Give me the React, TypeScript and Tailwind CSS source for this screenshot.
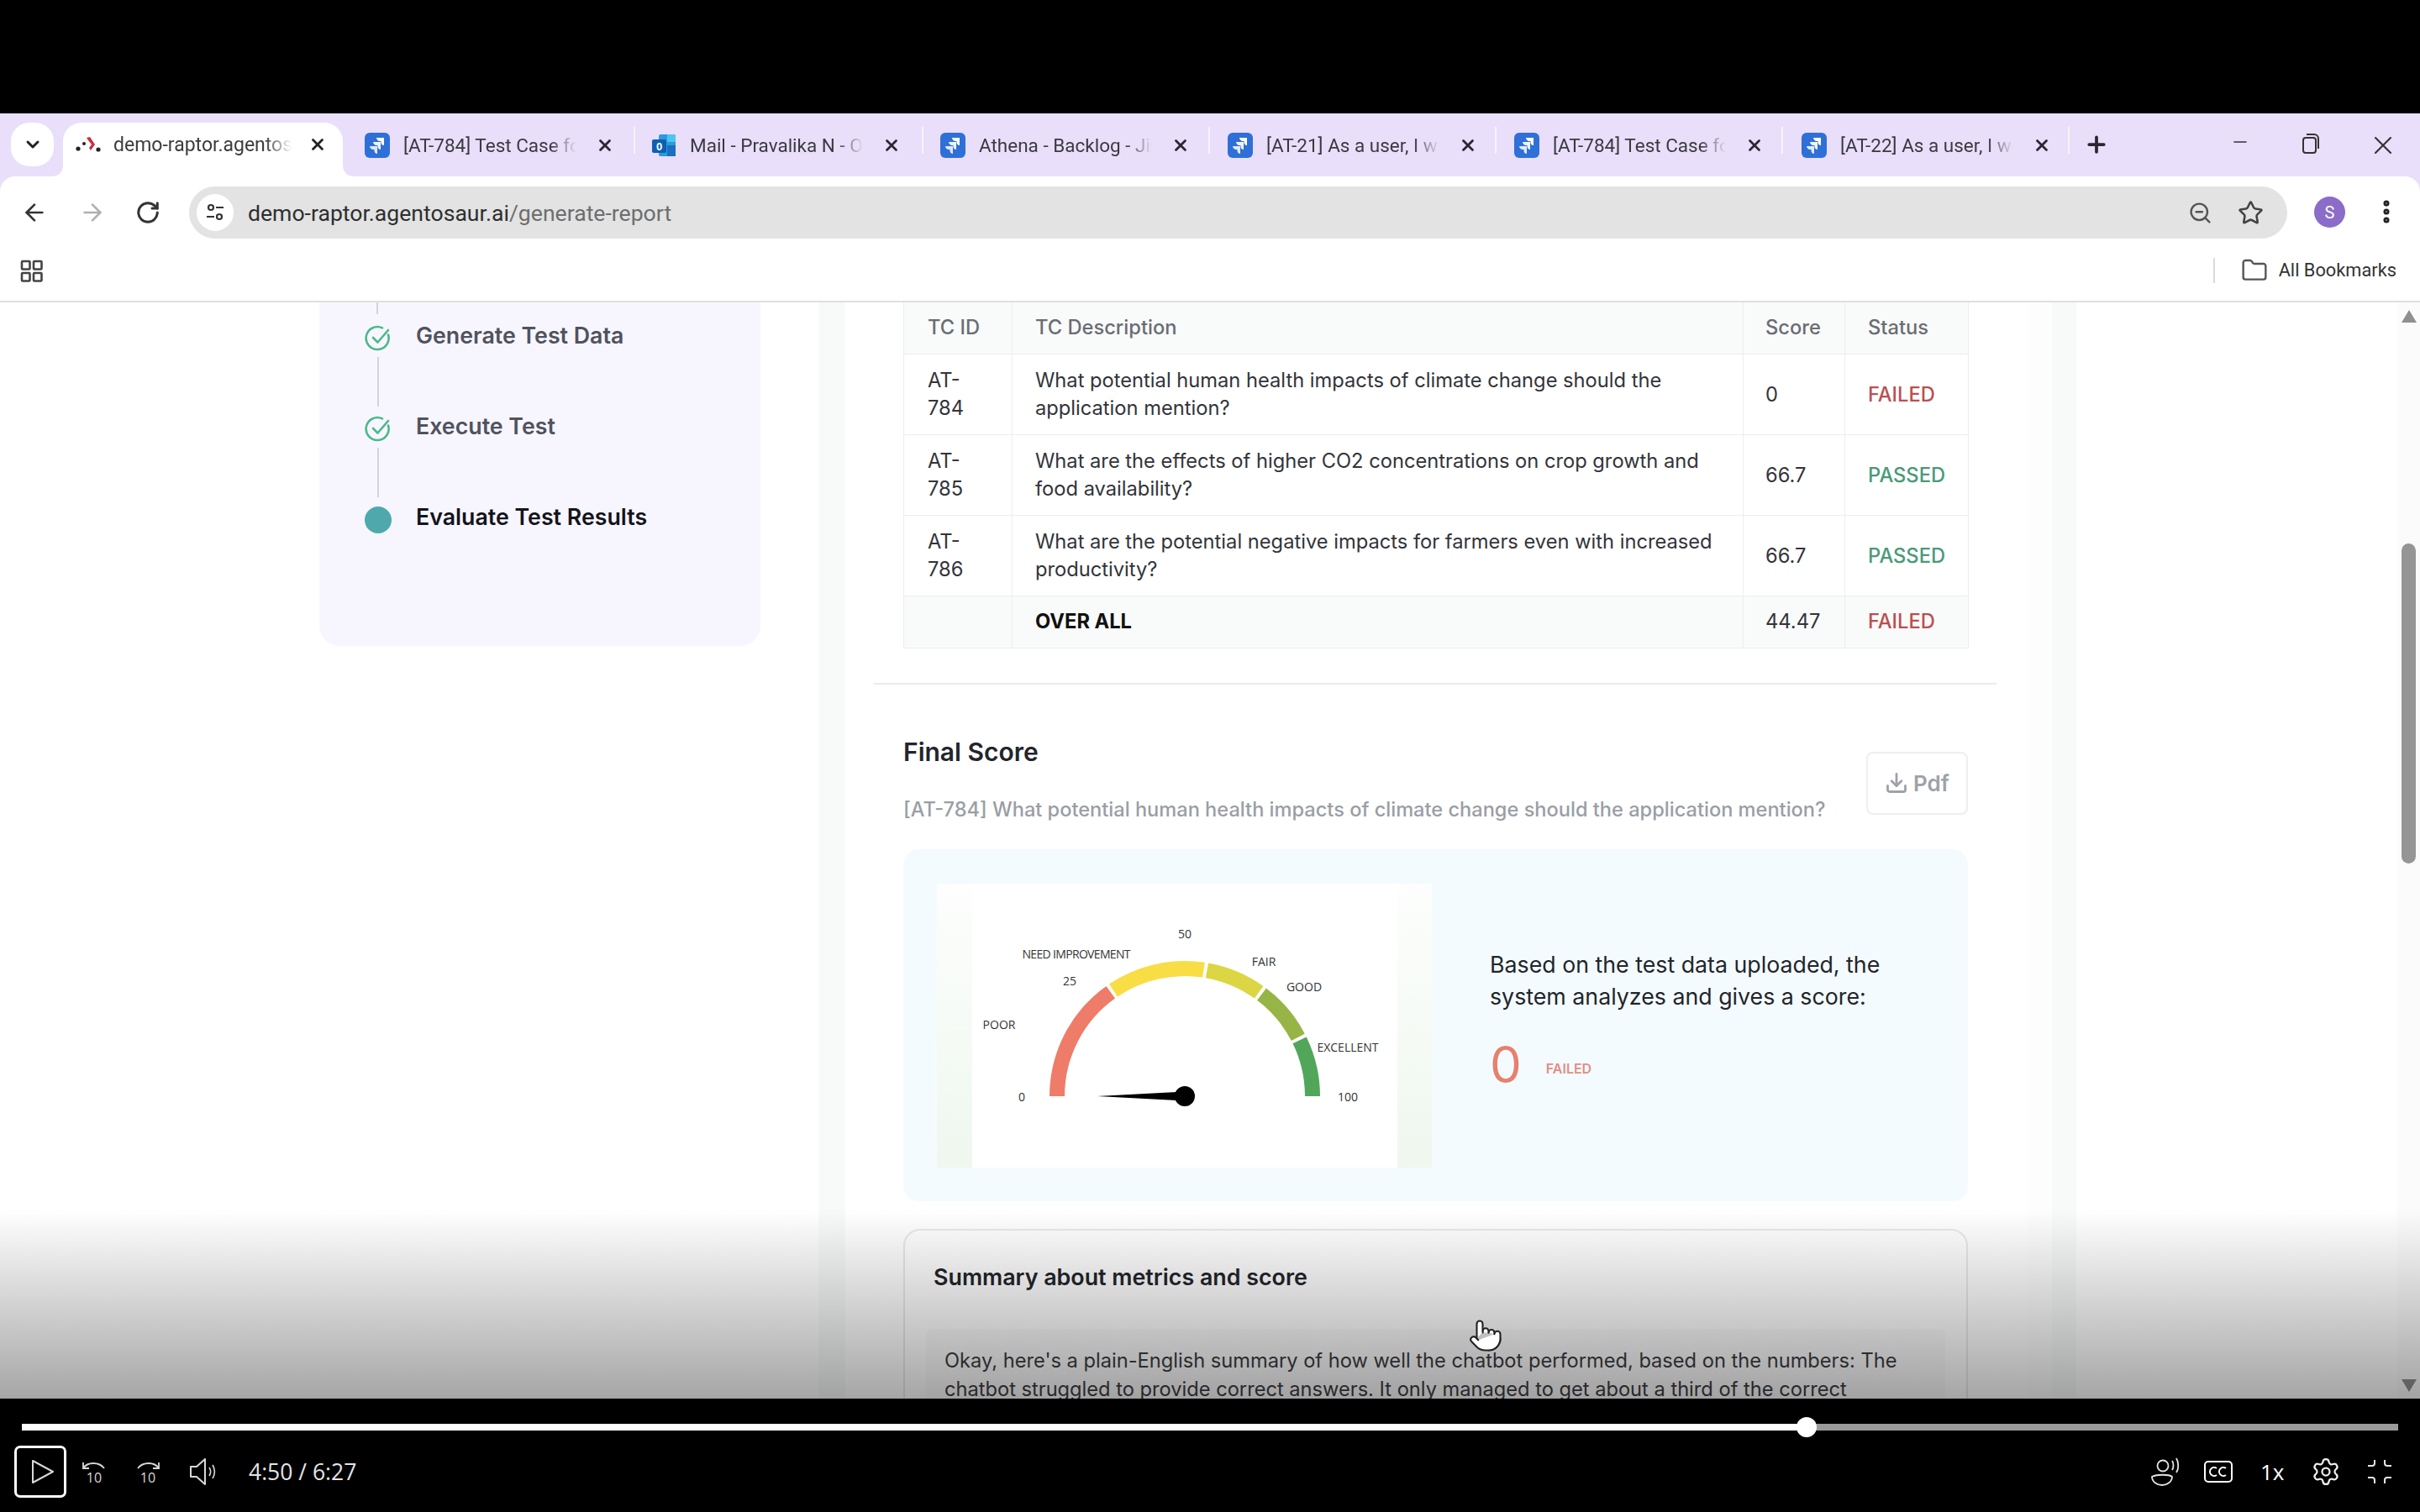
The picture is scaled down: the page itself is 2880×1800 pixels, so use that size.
import { ArrowLeft, ArrowRight, Download, Minus, Plus, RotateCw, Star, X, ZoomOut, EllipsisVertical, Folder, ChevronDown, Pointer, Settings } from "lucide-react";

const TABS = [
  { title: "[AT-784] Test Case for the user", icon: "jira", pl: "pl-[26px]", w: "w-[348px]" },
  { title: "Mail - Pravalika N - Outlook", icon: "mail", pl: "pl-[19px]", w: "w-[343px]" },
  { title: "Athena - Backlog - Jira board", icon: "jira", pl: "pl-[20px]", w: "w-[341px]" },
  { title: "[AT-21] As a user, I want to", icon: "jira", pl: "pl-[21px]", w: "w-[341px]" },
  { title: "[AT-784] Test Case for the user", icon: "jira", pl: "pl-[21px]", w: "w-[341px]" },
  { title: "[AT-22] As a user, I want to", icon: "jira", pl: "pl-[22px]", w: "w-[341px]" },
];

const ROWS = [
  { id: "AT-784", text: "What potential human health impacts of climate change should the application mention?", score: "0", status: "FAILED" },
  { id: "AT-785", text: "What are the effects of higher CO2 concentrations on crop growth and food availability?", score: "66.7", status: "PASSED" },
  { id: "AT-786", text: "What are the potential negative impacts for farmers even with increased productivity?", score: "66.7", status: "PASSED" },
];

function JiraIcon() {
  return (
    <svg width="30" height="30" viewBox="0 0 30 30" className="shrink-0">
      <rect width="30" height="30" rx="6" fill="#2f6fd8" />
      <path d="M14 6h9v9c-2 0-3.5-1.5-3.5-3.5V10H18c-2 0-4-2-4-4z" fill="#fff" />
      <path d="M10 11h9v9c-2 0-3.5-1.5-3.5-3.5V15H14c-2 0-4-2-4-4z" fill="#fff" opacity="0.92" />
      <path d="M6 16h9v9c-2 0-3.5-1.5-3.5-3.5V20H10c-2 0-4-2-4-4z" fill="#fff" opacity="0.85" />
    </svg>
  );
}

function MailIcon() {
  return (
    <svg width="30" height="30" viewBox="0 0 30 30" className="shrink-0">
      <rect x="9" y="2" width="20" height="26" rx="2" fill="#2a9bdc" />
      <rect x="19" y="2" width="10" height="9" fill="#4fc3ef" />
      <rect x="19" y="15" width="10" height="13" fill="#1c6fc0" />
      <rect x="1" y="8" width="17" height="16" rx="2" fill="#0f5fb0" />
      <text x="9.5" y="20.5" fontSize="13" fontWeight="700" textAnchor="middle" fill="#fff" fontFamily="'Liberation Sans', sans-serif">0</text>
    </svg>
  );
}

function RaptorIcon() {
  return (
    <svg width="30" height="30" viewBox="0 0 30 30" className="shrink-0">
      <path d="M13 7l4-1 6 9-5 7-2-3 3-4-4-5z" fill="#c8313c" />
      <circle cx="3" cy="20" r="2.6" fill="#222" />
      <circle cx="10" cy="14" r="2" fill="#222" />
      <circle cx="27" cy="21" r="2.6" fill="#222" />
    </svg>
  );
}

function Tab({ title, icon, pl, w }: { title: string; icon: string; pl: string; w: string }) {
  return (
    <div className={`flex items-center h-[75px] ${w} ${pl} relative`}>
      {icon === "jira" ? <JiraIcon /> : <MailIcon />}
      <span className="ml-[16px] mt-[2px] w-[206px] overflow-hidden whitespace-nowrap text-[22.5px] text-[#3b3a40] [mask-image:linear-gradient(to_right,black_85%,transparent)]">
        {title}
      </span>
      <X size={22} strokeWidth={3} className="ml-[23px] text-[#2a2733] shrink-0" />
      <div className="absolute right-0 top-[16px] h-[32px] w-[2px] bg-[#f7f3fe]" />
    </div>
  );
}

function BrowserChrome() {
  return (
    <header className="bg-[#e9dffa] font-['Roboto',sans-serif]">
      <div className="flex items-start h-[75px] pl-[13px]">
        <div className="mt-[11px] flex h-[52px] w-[51px] items-center justify-center rounded-[22px] bg-white">
          <ChevronDown size={24} strokeWidth={3} className="text-[#222]" />
        </div>
        <div className="relative ml-[11px] mt-[11px] flex h-[64px] w-[333px] items-center rounded-t-[22px] bg-white pl-[15px] pb-[12px]">
          <RaptorIcon />
          <span className="ml-[15px] mt-[2px] w-[212px] overflow-hidden whitespace-nowrap text-[23px] text-[#3c3c40] [mask-image:linear-gradient(to_right,black_85%,transparent)]">
            demo-raptor.agentosaur.ai
          </span>
          <X size={22} strokeWidth={3} className="ml-[20px] text-[#222]" />
          <svg width="14" height="14" viewBox="0 0 14 14" className="absolute -right-[14px] bottom-0">
            <path d="M0 0C0 9 5 14 14 14H0z" fill="#fff" />
          </svg>
          <svg width="14" height="14" viewBox="0 0 14 14" className="absolute -left-[14px] bottom-0">
            <path d="M14 0C14 9 9 14 0 14H14z" fill="#fff" />
          </svg>
        </div>
        {TABS.map((t, i) => (
          <Tab key={i} {...t} />
        ))}
        <Plus size={30} strokeWidth={3} className="ml-[17px] mt-[22px] text-[#2a2733]" />
        <Minus size={24} strokeWidth={1.6} className="ml-[144px] mt-[22px] text-[#333]" />
        <svg width="24" height="30" viewBox="0 0 24 30" className="ml-[60px] mt-[22px] text-[#333]" fill="none" stroke="currentColor" strokeWidth="2">
          <rect x="3" y="7" width="15" height="18" rx="3" />
          <path d="M7 3h9a5 5 0 0 1 5 5v12" />
        </svg>
        <X size={36} strokeWidth={1.4} className="ml-[56px] mt-[20px] text-[#333]" />
      </div>
      <div className="rounded-t-[18px] bg-white">
        <div className="flex h-[75px] items-start pt-[12px]">
          <ArrowLeft size={32} strokeWidth={2} className="ml-[25px] mt-[15px] text-[#333]" />
          <ArrowRight size={32} strokeWidth={2} className="ml-[37px] mt-[15px] text-[#b0b0b0]" />
          <RotateCw size={30} strokeWidth={2.4} className="ml-[35px] mt-[16px] text-[#333]" />
          <div className="ml-[34px] flex h-[62px] w-[2497px] items-center rounded-full bg-[#e2e3e2] pl-[9px] pr-[28px]">
            <div className="flex h-[44px] w-[44px] items-center justify-center rounded-full bg-white">
              <svg width="26" height="26" viewBox="0 0 26 26" fill="none" stroke="#333" strokeWidth="2.2">
                <circle cx="8" cy="7" r="3" />
                <path d="M14 7h9M3 18h9" />
                <circle cx="18" cy="18" r="3" />
              </svg>
            </div>
            <span className="ml-[17px] mt-[2px] text-[26.6px] leading-none text-[#2e2f30]">
              demo-raptor.agentosaur.ai<span className="text-[#6d6e6f]">/generate-report</span>
            </span>
            <ZoomOut size={29} strokeWidth={2} className="ml-auto text-[#555]" />
            <Star size={31} strokeWidth={2} className="ml-[30px] text-[#444]" />
          </div>
          <div className="ml-[32px] mt-[12px] flex h-[37px] w-[37px] items-center justify-center rounded-full bg-[#8b6cc9] text-[20px] text-white">
            S
          </div>
          <EllipsisVertical size={34} strokeWidth={3} className="ml-[32px] mt-[13px] text-[#222]" />
        </div>
        <div className="flex h-[75px] items-start border-b-2 border-[#dfdfdf]">
          <svg width="28" height="28" viewBox="0 0 28 28" className="ml-[24px] mt-[24px] text-[#444]" fill="none" stroke="currentColor" strokeWidth="2.6">
            <rect x="2" y="2" width="9.5" height="9.5" rx="1" />
            <rect x="16" y="2" width="9.5" height="9.5" rx="1" />
            <rect x="2" y="16" width="9.5" height="9.5" rx="1" />
            <rect x="16" y="16" width="9.5" height="9.5" rx="1" />
          </svg>
          <div className="ml-auto mt-[22px] h-[30px] w-[2px] bg-[#dcd8e6]" />
          <Folder size={32} strokeWidth={1.8} className="ml-[31px] mt-[21px] text-[#555]" />
          <span className="ml-[13px] mr-[28px] mt-[22px] text-[21.8px] leading-[30px] text-[#333]">All Bookmarks</span>
        </div>
      </div>
    </header>
  );
}

function Step({ label, active, line }: { label: string; active?: boolean; line?: boolean }) {
  return (
    <div className="flex">
      <div className="flex w-[32px] flex-col items-center">
        {active ? (
          <div className="h-[32px] w-[32px] rounded-full bg-[#4fa9ac]" />
        ) : (
          <svg width="32" height="32" viewBox="0 0 32 32" fill="none" stroke="#4cb98a" strokeWidth="2.6" strokeLinecap="round" strokeLinejoin="round">
            <path d="M28 11.5A13.5 13.5 0 1 1 21 3.4" />
            <path d="M10 15l5.5 5.5L28 6" />
          </svg>
        )}
        {line && <div className="mb-[11px] mt-[6px] h-[59px] w-[2px] bg-[#d3d3dc]" />}
      </div>
      <div className={`ml-[29px] -mt-[6px] text-[26.75px] font-semibold leading-[36px] ${active ? "text-[#14141c]" : "text-[#50525e]"}`}>{label}</div>
    </div>
  );
}

function Sidebar() {
  return (
    <aside className="ml-[380px] h-[409px] w-[525px] shrink-0 rounded-b-[24px] bg-[#f7f6fe] pl-[54px]">
      <div className="ml-[14px] h-[14px] w-[2px] bg-[#d3d3dc]" />
      <div className="mt-[13px]">
        <Step label="Generate Test Data" line />
        <Step label="Execute Test" line />
        <Step label="Evaluate Test Results" active />
      </div>
    </aside>
  );
}

function statusColor(s: string) {
  return s === "FAILED" ? "text-[#bb4f50]" : "text-[#4a9a78]";
}

function ResultsTable() {
  return (
    <table className="w-[1267px] table-fixed border-collapse text-[23.7px] text-[#33343a]">
      <colgroup>
        <col className="w-[129px]" />
        <col className="w-[870px]" />
        <col className="w-[121px]" />
        <col className="w-[147px]" />
      </colgroup>
      <thead>
        <tr className="h-[61px] bg-[#f9fafa] text-left text-[#6a6d74]">
          <th className="border border-t-0 border-[#eceeee] pl-[28px] font-medium">TC ID</th>
          <th className="border border-t-0 border-[#eceeee] pl-[27px] font-medium">TC Description</th>
          <th className="border border-t-0 border-[#eceeee] pl-[26px] font-medium">Score</th>
          <th className="border border-t-0 border-[#eceeee] pl-[27px] font-medium">Status</th>
        </tr>
      </thead>
      <tbody>
        {ROWS.map((r) => (
          <tr key={r.id} className="h-[96px] leading-[33px]">
            <td className="border border-[#eceeee] pl-[28px] pr-[28px]">{r.id}</td>
            <td className="border border-[#eceeee] pl-[27px] pr-[8px]">{r.text}</td>
            <td className="border border-[#eceeee] pl-[26px]">{r.score}</td>
            <td className={`border border-[#eceeee] pl-[27px] font-medium ${statusColor(r.status)}`}>{r.status}</td>
          </tr>
        ))}
        <tr className="h-[62px] bg-[#f9fafa]">
          <td className="border border-[#eceeee]" />
          <td className="border border-[#eceeee] pl-[27px] font-bold text-[#111]">OVER ALL</td>
          <td className="border border-[#eceeee] pl-[26px]">44.47</td>
          <td className={`border border-[#eceeee] pl-[27px] font-medium ${statusColor("FAILED")}`}>FAILED</td>
        </tr>
      </tbody>
    </table>
  );
}

// arc band between two angles (degrees, 180 = left, 0 = right)
function arc(a0: number, a1: number, ro = 161, ri = 143) {
  const p = (r: number, a: number) => {
    const t = (a * Math.PI) / 180;
    return `${(295 + r * Math.cos(t)).toFixed(1)} ${(253 - r * Math.sin(t)).toFixed(1)}`;
  };
  return `M${p(ro, a0)}A${ro} ${ro} 0 0 1 ${p(ro, a1)}L${p(ri, a1)}A${ri} ${ri} 0 0 0 ${p(ri, a0)}Z`;
}

const SEGMENTS = [
  { from: 180, to: 125.5, color: "#ee7c69" },
  { from: 124, to: 81.5, color: "#f8dd45" },
  { from: 80, to: 54.5, color: "#dcd645" },
  { from: 53, to: 27.5, color: "#97b546" },
  { from: 26, to: 0, color: "#52a65a" },
];

const GAUGE_LABELS = [
  { x: 295, y: 61, t: "50" },
  { x: 166, y: 85, t: "NEED IMPROVEMENT" },
  { x: 158, y: 117, t: "25" },
  { x: 389, y: 94, t: "FAIR" },
  { x: 437, y: 124, t: "GOOD" },
  { x: 74, y: 169, t: "POOR" },
  { x: 489, y: 196, t: "EXCELLENT" },
  { x: 101, y: 255, t: "0" },
  { x: 489, y: 255, t: "100" },
];

function Gauge() {
  return (
    <div className="flex h-[338px] w-[589px] shrink-0 justify-center bg-gradient-to-b from-[#fdfefd] to-[#eff7ef]">
      <div className="h-full w-[506px] bg-white">
        <svg width="506" height="338" viewBox="42 0 506 338" className="block">
          {SEGMENTS.map((s) => (
            <path key={s.from} d={arc(s.from, s.to)} fill={s.color} />
          ))}
          <path d="M191 253L295 247.5V258.5Z" fill="#000" />
          <circle cx="295" cy="253" r="12" fill="#000" />
          {GAUGE_LABELS.map((l) => (
            <text key={l.t} x={l.x} y={l.y} fontSize="14" textAnchor="middle" dominantBaseline="middle" fill="#333" fontFamily="'Open Sans', sans-serif" textLength={l.t === "NEED IMPROVEMENT" ? 129 : undefined}>
              {l.t}
            </text>
          ))}
        </svg>
      </div>
    </div>
  );
}

function MainPanel() {
  return (
    <main className="ml-[69px] w-[1497px] shrink-0 bg-[#f8fafa] px-[32px] pr-[29px]">
      <div className="h-full overflow-hidden border-r-[29px] border-[#fdfdfd] bg-white pl-[34px]">
        <div className="w-[1336px]">
          <div className="pl-[35px]">
            <ResultsTable />
          </div>
          <div className="mt-[41px] border-b-2 border-[#ebebeb]" />
          <div className="pl-[35px] pr-[34px]">
            <div className="mt-[62px] flex justify-between">
              <div>
                <h2 className="text-[30px] font-semibold leading-[36px] text-[#23252b]">Final Score</h2>
                <p className="mt-[33px] whitespace-nowrap text-[23.6px] font-medium leading-[36px] text-[#9a9ea5]">
                  [AT-784] What potential human health impacts of climate change should the application mention?
                </p>
              </div>
              <button className="mt-[18px] flex h-[75px] w-[121px] items-center justify-center gap-[6px] rounded-[8px] border-2 border-[#eeeeee] text-[26px] font-semibold text-[#9ea2a8]">
                <Download size={28} strokeWidth={2.4} />
                Pdf
              </button>
            </div>
            <section className="mt-[29px] flex h-[419px] rounded-[18px] bg-[#f4fbfe] pl-[40px] pt-[41px]">
              <Gauge />
              <div className="ml-[69px] pt-[77px]">
                <p className="w-[500px] text-[26.75px] leading-[38px] text-[#22252b]">
                  Based on the test data uploaded, the system analyzes and gives a score:
                </p>
                <div className="mt-[32px] flex items-center">
                  <span className="text-[60px] leading-[60px] text-[#e8806f]">0</span>
                  <span className="ml-[29px] mt-[11px] text-[16px] font-semibold text-[#e08f85]">FAILED</span>
                </div>
              </div>
            </section>
            <section className="mt-[33px] h-[400px] rounded-[20px] border-2 border-[#e9e9e9] px-[25px] pt-[37px]">
              <h3 className="pl-[9px] text-[26.83px] font-semibold leading-[36px] text-[#23252b]">Summary about metrics and score</h3>
              <div className="mt-[44px] rounded-[8px] bg-[#fafafa] pl-[22px] pr-[18px] pt-[21px] text-[23.65px] leading-[34px] text-[#3c3d42]">
                Okay, here's a plain-English summary of how well the chatbot performed, based on the numbers: The chatbot struggled to provide correct answers. It only managed to get about a third of the correct
              </div>
            </section>
          </div>
        </div>
      </div>
    </main>
  );
}

function Scrollbar() {
  return (
    <div className="ml-auto flex w-[27px] shrink-0 flex-col items-center bg-[#fbfbfb] pt-[9px] pb-[8px]">
      <div className="h-0 w-0 border-x-[9px] border-b-[15px] border-x-transparent border-b-[#8f8f8f]" />
      <div className="mt-[263px] h-[381px] w-[17px] rounded-full bg-[#959595]" />
      <div className="mt-auto h-0 w-0 border-x-[9px] border-t-[15px] border-x-transparent border-t-[#8f8f8f]" />
    </div>
  );
}

function VideoBar() {
  return (
    <footer className="h-[135px] bg-black font-['Open_Sans',sans-serif] text-[#e4e4e4]">
      <div className="pl-[26px] pr-[26px] pt-[30px]">
        <div className="relative h-[8px] bg-[#9b9b9b]">
          <div className="h-full w-[2124px] bg-white" />
          <div className="absolute left-[2112px] top-[-8px] h-[24px] w-[24px] rounded-full bg-white" />
        </div>
      </div>
      <div className="flex items-center pl-[17px] pt-[18px]">
        <div className="flex h-[62px] w-[62px] items-center justify-center rounded-[7px] border-[3px] border-white pl-[6px]">
          <svg width="28" height="30" viewBox="0 0 28 30" fill="none" stroke="#d8d8d8" strokeWidth="2" strokeLinejoin="round">
            <path d="M2 2L26 15 2 28Z" />
          </svg>
        </div>
        <svg width="30" height="30" viewBox="0 0 30 30" className="ml-[18px]" fill="none" stroke="#d8d8d8" strokeWidth="1.8">
          <path d="M2 11C7 3 21 3 27 11" />
          <path d="M2 4v7h7" />
          <text x="15" y="28" fontSize="16" textAnchor="middle" fill="#d8d8d8" stroke="none">10</text>
        </svg>
        <svg width="30" height="30" viewBox="0 0 30 30" className="ml-[34px]" fill="none" stroke="#d8d8d8" strokeWidth="1.8">
          <path d="M28 11C23 3 9 3 3 11" />
          <path d="M28 4v7h-7" />
          <text x="15" y="28" fontSize="16" textAnchor="middle" fill="#d8d8d8" stroke="none">10</text>
        </svg>
        <svg width="32" height="34" viewBox="0 0 32 34" className="ml-[34px]" fill="none" stroke="#d8d8d8" strokeWidth="2" strokeLinejoin="round">
          <path d="M2 11h7L19 2v30L9 23H2Z" />
          <path d="M24 12c2 3 2 7 0 10M28 9c3 5 3 11 0 16" strokeWidth="1.6" />
        </svg>
        <span className="ml-[39px] text-[26.5px] leading-none">4:50 / 6:27</span>
        <svg width="34" height="34" viewBox="0 0 34 34" className="ml-auto" fill="none" stroke="#e4e4e4" strokeWidth="1.8">
          <circle cx="14" cy="10" r="6.5" />
          <path d="M1 23c6-3 20-3 24 0 0 6-6 10-12 10S1 29 1 23Z" />
          <path d="M25 4c2 3 2 8 0 11M30 1c3 5 3 13 0 17" />
        </svg>
        <svg width="34" height="26" viewBox="0 0 34 26" className="ml-[29px]" fill="none" stroke="#fff" strokeWidth="2">
          <rect x="1" y="1" width="32" height="24" rx="4" />
          <path d="M15 9a5 5 0 1 0 0 8M26 9a5 5 0 1 0 0 8" />
        </svg>
        <span className="ml-[33px] w-[28px] whitespace-nowrap text-[26px] leading-none text-white">1x</span>
        <Settings size={36} strokeWidth={1.5} className="ml-[32px] text-[#eee]" />
        <svg width="30" height="30" viewBox="0 0 30 30" className="ml-[31px] mr-[33px]" fill="none" stroke="#e4e4e4" strokeWidth="2">
          <path d="M9 1v4a3 3 0 0 1-3 3H1M21 1v4a3 3 0 0 0 3 3h5M9 29v-4a3 3 0 0 0-3-3H1M21 29v-4a3 3 0 0 1 3-3h5" />
        </svg>
      </div>
    </footer>
  );
}

export default function App() {
  return (
    <div className="flex h-[1800px] w-[2880px] flex-col overflow-hidden bg-black font-['Inter',sans-serif]">
      <div className="h-[135px] shrink-0 bg-black" />
      <BrowserChrome />
      <div className="relative flex h-[1305px] shrink-0 overflow-hidden bg-white">
        <Sidebar />
        <MainPanel />
        <Scrollbar />
        {/* video player's dark fade over the page */}
        <div className="pointer-events-none absolute inset-x-0 bottom-0 h-[225px] bg-gradient-to-b from-transparent to-black/35" />
        <Pointer size={42} strokeWidth={1.2} className="absolute left-[1747px] top-[1209px] fill-white text-[#222]" />
      </div>
      <VideoBar />
    </div>
  );
}
